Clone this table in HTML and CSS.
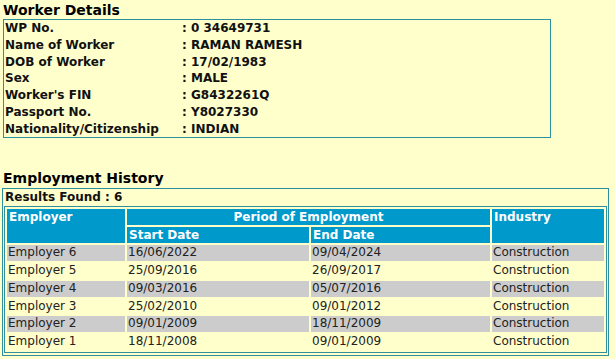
FILE: index.html
```html
<!DOCTYPE html>
<html>
<head>
<meta charset="utf-8">
<link rel="stylesheet" href="styles.css">
</head>
<body>
<h2 class="title">Worker Details</h2>
<table class="details">
  <tr><td class="lbl">WP No.</td><td>: 0 34649731</td></tr>
  <tr><td class="lbl">Name of Worker</td><td>: RAMAN RAMESH</td></tr>
  <tr><td class="lbl">DOB of Worker</td><td>: 17/02/1983</td></tr>
  <tr><td class="lbl">Sex</td><td>: MALE</td></tr>
  <tr><td class="lbl">Worker's FIN</td><td>: G8432261Q</td></tr>
  <tr><td class="lbl">Passport No.</td><td>: Y8027330</td></tr>
  <tr><td class="lbl">Nationality/Citizenship</td><td>: INDIAN</td></tr>
</table>

<h2 class="title title-history">Employment History</h2>
<div class="history">
  <div class="results">Results Found : 6</div>
  <table class="grid">
    <colgroup>
      <col class="c-emp"><col class="c-start"><col class="c-end"><col class="c-ind">
    </colgroup>
    <tr class="head">
      <th rowspan="2">Employer</th>
      <th colspan="2" class="center">Period of Employment</th>
      <th rowspan="2">Industry</th>
    </tr>
    <tr class="head">
      <th>Start Date</th>
      <th>End Date</th>
    </tr>
    <tr class="odd"><td>Employer 6</td><td>16/06/2022</td><td>09/04/2024</td><td>Construction</td></tr>
    <tr class="even"><td>Employer 5</td><td>25/09/2016</td><td>26/09/2017</td><td>Construction</td></tr>
    <tr class="odd"><td>Employer 4</td><td>09/03/2016</td><td>05/07/2016</td><td>Construction</td></tr>
    <tr class="even"><td>Employer 3</td><td>25/02/2010</td><td>09/01/2012</td><td>Construction</td></tr>
    <tr class="odd"><td>Employer 2</td><td>09/01/2009</td><td>18/11/2009</td><td>Construction</td></tr>
    <tr class="even"><td>Employer 1</td><td>18/11/2008</td><td>09/01/2009</td><td>Construction</td></tr>
  </table>
</div>
</body>
</html>
```

FILE: styles.css
```css
html, body {
  margin: 0;
  background: #ffffcc;
}
body {
  padding: 0 2px;
  font-family: "DejaVu Sans", Verdana, sans-serif;
  font-size: 12px;
  color: #111;
}
.title {
  margin: 0;
  font-size: 14px;
  font-weight: bold;
  line-height: 19px;
  padding-top: 1px;
  padding-left: 1px;
  color: #000;
}
.title-history {
  margin-top: 30px;
  line-height: 19px;
}
.details {
  margin-left: 1px;
  margin-top: -1px;
  width: 548px;
  border: 1px solid #2e8f9e;
  border-collapse: collapse;
  border-spacing: 0;
}
.details td {
  padding: 0 0 0 1px;
  height: 16.75px;
  line-height: 16.75px;
  font-weight: bold;
  white-space: nowrap;
}
.details td.lbl {
  width: 176px;
}
.history {
  width: 607px;
  box-sizing: border-box;
  border: 1px solid #2e8f9e;
  padding: 0 1px 2px 1px;
}
.results {
  font-weight: bold;
  line-height: 17px;
  padding-left: 1px;
}
.grid {
  width: 100%;
  border: 1px solid #2e8f9e;
  border-spacing: 2px;
  table-layout: fixed;
}
.c-emp { width: 118px; }
.c-start { width: 182px; }
.c-end { width: 179px; }
.c-ind { width: 112px; }
.grid th {
  background: #0099cc;
  color: #fff;
  text-align: left;
  vertical-align: top;
  font-weight: bold;
  padding: 0 2px;
  height: 16px;
  line-height: 16px;
}
.grid th.center {
  text-align: center;
}
.grid td {
  padding: 0 1px;
  height: 15.8px;
  line-height: 15.8px;
  color: #222;
  white-space: nowrap;
}
.grid tr.odd td { background: #cccccc; }
.grid tr.even td { background: #ffffcc; }
```
